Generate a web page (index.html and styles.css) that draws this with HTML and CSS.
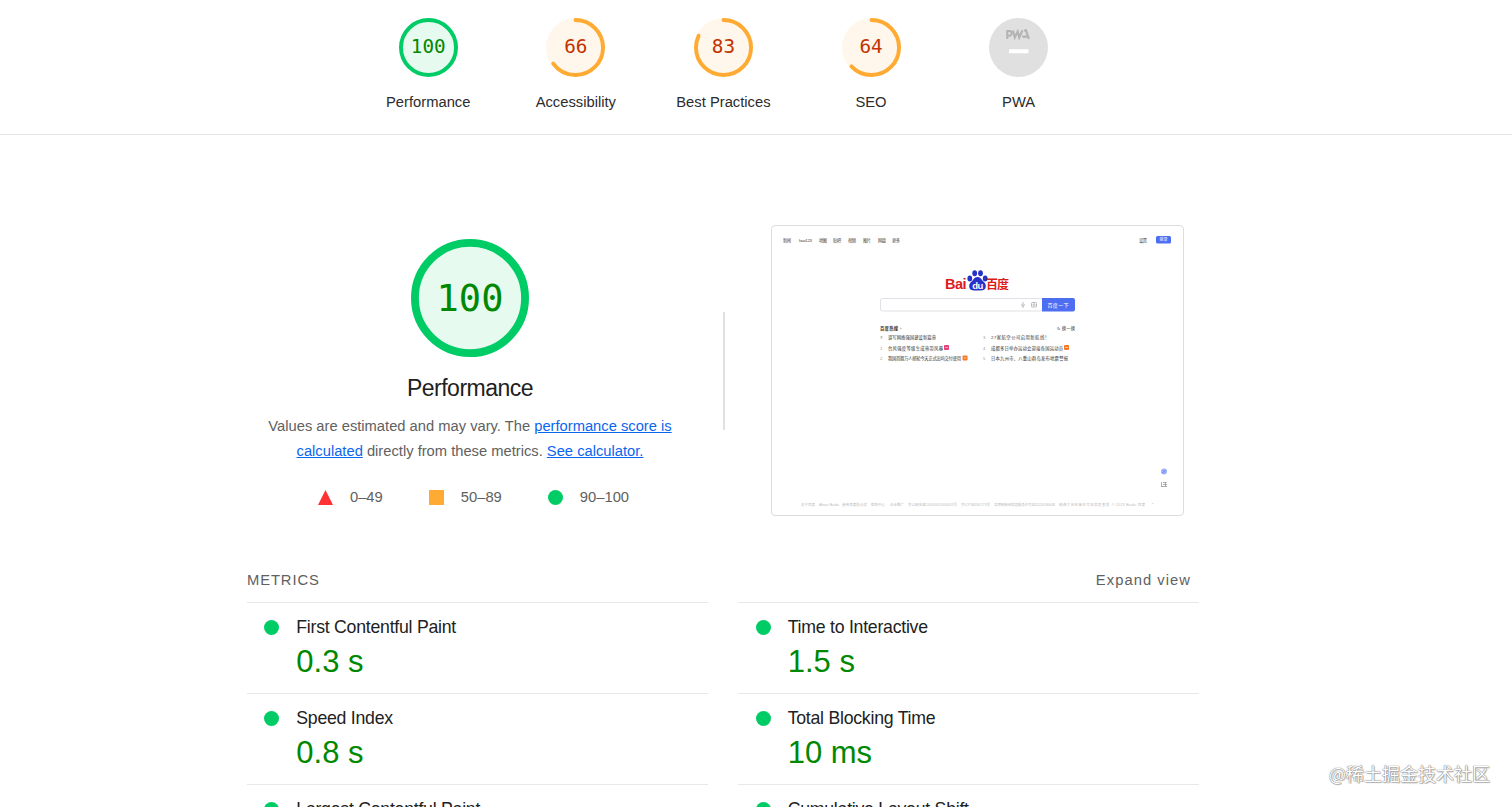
FILE: index.html
```
<!DOCTYPE html>
<html lang="en">
<head>
<meta charset="utf-8">
<title>Lighthouse Report</title>
<link rel="stylesheet" href="styles.css">
</head>
<body>
<header class="scores">
  <div class="score pass">
    <div class="gauge"><svg class="ring" viewBox="0 0 120 120"><circle class="base" cx="60" cy="60" r="56"/><circle class="arc" cx="60" cy="60" r="56"/></svg><span class="num">100</span></div>
    <span class="label">Performance</span>
  </div>
  <div class="score average">
    <div class="gauge"><svg class="ring" viewBox="0 0 120 120"><circle class="base" cx="60" cy="60" r="56"/><circle class="arc" cx="60" cy="60" r="56" pathLength="100" stroke-dasharray="65 100"/></svg><span class="num">66</span></div>
    <span class="label">Accessibility</span>
  </div>
  <div class="score average">
    <div class="gauge"><svg class="ring" viewBox="0 0 120 120"><circle class="base" cx="60" cy="60" r="56"/><circle class="arc" cx="60" cy="60" r="56" pathLength="100" stroke-dasharray="82 100"/></svg><span class="num">83</span></div>
    <span class="label">Best Practices</span>
  </div>
  <div class="score average">
    <div class="gauge"><svg class="ring" viewBox="0 0 120 120"><circle class="base" cx="60" cy="60" r="56"/><circle class="arc" cx="60" cy="60" r="56" pathLength="100" stroke-dasharray="63 100"/></svg><span class="num">64</span></div>
    <span class="label">SEO</span>
  </div>
  <div class="score">
    <div class="gauge"><svg class="pwa" viewBox="0 0 59 59"><circle cx="29.5" cy="29.5" r="29.5" fill="#e0e0e0"/><g fill="none" stroke="#b3b3b3" stroke-width="2.1"><path d="M18.300 21v-8h2a2.300 2.300 0 0 1 0 4.800h-2"/><path d="M24 12.500l1.800 7 2.900-6 1.500 6 3.300-7.300"/><path d="M33.200 18.600h5M35 12.800l2-.5 2.900 8.700"/></g><rect x="20" y="31.200" width="19.500" height="4" rx=".6" fill="#fff"/></svg></div>
    <span class="label">PWA</span>
  </div>
</header>

<main class="report">
  <section class="overview">
    <div class="summary">
      <div class="gauge big pass"><svg class="ring" viewBox="0 0 120 120"><circle class="base" cx="60" cy="60" r="56"/><circle class="arc" cx="60" cy="60" r="56"/></svg><span class="num">100</span></div>
      <h1 class="title">Performance</h1>
      <p class="note">Values are estimated and may vary. The <a href="#">performance score is</a><br><a href="#">calculated</a> directly from these metrics. <a href="#">See calculator.</a></p>
      <div class="scale">
        <span class="range"><svg class="mark" viewBox="0 0 15 15"><path d="M7.5 0L15 15H0z" fill="#f33"/></svg>0–49</span>
        <span class="range"><svg class="mark" viewBox="0 0 15 15"><path d="M0 0h15v15H0z" fill="#fa3"/></svg>50–89</span>
        <span class="range"><svg class="mark" viewBox="0 0 15 15"><circle cx="7.5" cy="7.5" r="7.5" fill="#0c6"/></svg>90–100</span>
      </div>
    </div>
    <div class="divider"></div>
    <svg class="shot" viewBox="0 0 411 289">
      <g class="nav">
        <text x="11" y="15.500" textLength="8">新闻</text><text x="27" y="15.500" textLength="13">hao123</text><text x="47" y="15.500" textLength="8">地图</text><text x="61" y="15.500" textLength="8">贴吧</text><text x="76" y="15.500" textLength="8">视频</text><text x="91" y="15.500" textLength="8">图片</text><text x="106" y="15.500" textLength="8">网盘</text><text x="120" y="15.500" textLength="8">更多</text><text x="367" y="15.500" textLength="8">设置</text>
      </g>
      <rect x="384" y="10" width="15" height="7.500" rx="1.5" fill="#4e6ef2"/>
      <text class="login" x="387.5" y="15.3" textLength="8">登录</text>
      <text class="logo" x="173" y="63" textLength="21.500">Bai</text>
      <g fill="#2932c8"><ellipse cx="197.800" cy="52.500" rx="2.4" ry="2.900"/><ellipse cx="202.700" cy="47.300" rx="2.4" ry="3"/><ellipse cx="208.500" cy="47.300" rx="2.4" ry="3"/><ellipse cx="213.200" cy="52.500" rx="2.4" ry="2.900"/><path d="M205.500 51c2.700 0 3.800 2 5.300 4 1.500 1.500 3.400 2.700 3 5.700-.4 3.300-3 3.900-8.300 3.900s-7.900-.6-8.300-3.900c-.4-3 1.500-4.200 3-5.700 1.500-2 2.600-4 5.300-4z"/></g>
      <text class="du" x="200.200" y="62.500" textLength="11">du</text>
      <text class="cn" x="214" y="62.500" textLength="23">百度</text>
      <rect x="108.500" y="72.500" width="162" height="12.500" rx="2" fill="#fff" stroke="#e0e1e6" stroke-width="1"/>
      <path d="M270 72h31a2 2 0 0 1 2 2v9.500a2 2 0 0 1-2 2h-31z" fill="#4e6ef2"/>
      <text class="search" x="275.500" y="80.500" textLength="21">百度一下</text>
      <g fill="none" stroke="#aaa" stroke-width=".8"><path d="M251 76v3.500M249 78.500q2 3 4 0M251 80v2"/><rect x="259.500" y="76.500" width="5" height="4.500" rx="1"/><circle cx="262" cy="78.700" r="1"/></g>
      <g class="news">
        <text class="heading" x="108" y="103.500" textLength="18">百度热搜</text><text x="128" y="103.500">›</text><text x="285" y="103.500" textLength="18">↻ 换一换</text>
        <text class="rank" x="108" y="113">⊼</text><text x="116" y="113" textLength="48">谱写网络强国建设新篇章</text>
        <text class="rank" x="108" y="123.500">1</text><text x="116" y="123.500" textLength="55">台风强度等级生成热带风暴</text>
        <text class="rank" x="108" y="134">2</text><text x="116" y="134" textLength="73">我国首艘万人邮轮今天正式出坞交付使用</text>
        <text class="rank" x="211" y="113">3</text><text x="219" y="113" textLength="58">27家航空公司启用新航线！</text>
        <text class="rank" x="211" y="123.500">4</text><text x="219" y="123.500" textLength="72">成都多日举办运动会迎接各国运动员</text>
        <text class="rank" x="211" y="134">5</text><text x="219" y="134" textLength="77">日本九州市、八重山群岛发布地震警报</text>
      </g>
      <g><rect x="172" y="119" width="5" height="5" rx="1" fill="#e83e76"/><rect x="190.500" y="129.500" width="5" height="5" rx="1" fill="#f67b24"/><rect x="292" y="119" width="5" height="5" rx="1" fill="#f67b24"/></g>
      <g fill="none" stroke="#fff" stroke-width=".6"><path d="M173.200 121.500h2.600M191.700 132h2.600M293.200 121.500h2.600"/></g>
      <circle cx="392" cy="245.500" r="3" fill="#9db1f5"/><path d="M390.500 247l3-3" stroke="#4e6ef2" stroke-width=".8"/>
      <path d="M389.500 256v5M391 256.500h3.500M391 258.500h4M389 260.500h6M393.500 256v5" fill="none" stroke="#999" stroke-width=".8"/>
      <g class="foot"><text x="29" y="279.500" textLength="14">关于百度</text><text x="47" y="279.500" textLength="20">About Baidu</text><text x="70" y="279.500" textLength="25">使用百度前必读</text><text x="99" y="279.500" textLength="14">帮助中心</text><text x="118" y="279.500" textLength="14">企业推广</text><text x="136" y="279.500" textLength="49">京公网安备11000002000001号</text><text x="189" y="279.500" textLength="29">京ICP证030173号</text><text x="222" y="279.500" textLength="61">互联网新闻信息服务许可证11220180008</text><text x="287" y="279.500" textLength="50">网络文化经营许可证信息查询</text><text x="340" y="279.500" textLength="33">© 2023 Baidu 百度</text><text x="379" y="279.500">⌃</text></g>
    </svg>
  </section>

  <section class="metrics">
    <div class="metrics-head"><span class="caps">METRICS</span><span class="expand">Expand view</span></div>
    <div class="grid">
      <div class="metric"><i class="dot"></i><div><div class="name">First Contentful Paint</div><div class="value">0.3 s</div></div></div>
      <div class="metric"><i class="dot"></i><div><div class="name">Time to Interactive</div><div class="value">1.5 s</div></div></div>
      <div class="metric"><i class="dot"></i><div><div class="name">Speed Index</div><div class="value">0.8 s</div></div></div>
      <div class="metric"><i class="dot"></i><div><div class="name">Total Blocking Time</div><div class="value">10 ms</div></div></div>
      <div class="metric"><i class="dot"></i><div><div class="name">Largest Contentful Paint</div></div></div>
      <div class="metric"><i class="dot"></i><div><div class="name">Cumulative Layout Shift</div></div></div>
    </div>
  </section>
</main>
<div class="watermark">@稀土掘金技术社区</div>
</body>
</html>
```
FILE: styles.css
```
* { box-sizing: border-box; }
body {
  margin: 0;
  height: 807px;
  overflow: hidden;
  background: #fff;
  color: #212121;
  font-family: "Liberation Sans", Arial, "Noto Sans CJK SC", sans-serif;
  font-size: 14.76px;
}
.scores {
  display: flex;
  justify-content: center;
  height: 135px;
  padding: 17.600px 65.200px 0 0;
  border-bottom: 1px solid #e6e6e6;
}
.score {
  display: flex;
  flex-direction: column;
  align-items: center;
  width: 147.600px;
}
.gauge {
  display: grid;
  place-items: center;
  width: 59px;
  height: 59px;
}
.gauge > * { grid-area: 1 / 1; }
.ring, .pwa { display: block; width: 100%; height: 100%; }
.ring { transform: rotate(-90deg); }
.arc { fill: none; stroke-width: 8; stroke-linecap: round; }
.pass .base { fill: #e6faf0; }
.pass .arc { stroke: #0c6; }
.pass .num { color: #080; }
.average .base { fill: #fff7eb; stroke: #fff7eb; stroke-width: 8; }
.average .arc { stroke: #fa3; }
.average .num { color: #c33300; }
.num {
  z-index: 1;
  font-family: "DejaVu Sans Mono", monospace;
  font-size: 19.300px;
  line-height: 1;
}
.label { margin-top: 17px; color: #2c2c2c; line-height: 17px; }
.report { width: 953.500px; margin-left: 247px; }
.overview {
  display: flex;
  height: 381px;
  padding-top: 90px;
}
.summary {
  display: flex;
  flex-direction: column;
  align-items: center;
  width: 446px;
  padding-top: 14px;
}
.gauge.big { width: 118px; height: 118px; }
.big .num { font-size: 37px; }
.title {
  margin: 18px 0 0;
  font-size: 23px;
  font-weight: 400;
  letter-spacing: -.5px;
  line-height: 26px;
}
.note {
  margin: 13px 0 0;
  color: #616161;
  font-size: 14.730px;
  line-height: 24.600px;
  text-align: center;
  white-space: nowrap;
}
.note a { color: #0b66ee; }
.scale {
  display: flex;
  gap: 46px;
  margin: 26px 0 0 7px;
  color: #616161;
  line-height: 17px;
}
.range { display: flex; align-items: center; gap: 17px; }
.mark { width: 15px; height: 15px; }
.divider {
  width: 2px;
  height: 118px;
  margin: 87px 46px 0 29.500px;
  background: #e0e0e0;
}
.shot {
  width: 413px;
  height: 291px;
  border: 1px solid #dcdcdc;
  border-radius: 4px;
}
.shot text { font-size: 4.300px; }
.nav { fill: #444; }
.shot .login { fill: #fff; font-size: 4px; }
.shot .logo { fill: #de1b1b; font-size: 14.500px; font-weight: 700; }
.shot .du { fill: #fff; font-size: 9.500px; font-weight: 700; }
.shot .cn { fill: #de1b1b; font-size: 12px; font-weight: 700; }
.shot .search { fill: #fff; font-size: 5px; }
.news { fill: #333; }
.news .rank { fill: #999; }
.news .heading { font-weight: 700; }
.foot { fill: #bbb; }
.shot .foot text { font-size: 3.500px; }
.metrics-head {
  display: flex;
  justify-content: space-between;
  height: 86px;
  padding: 55.500px 9.500px 0 0;
  color: #616161;
  line-height: 17px;
  letter-spacing: .9px;
}
.expand { letter-spacing: 1.050px; }
.grid {
  display: grid;
  grid-template-columns: 461px 461px;
  column-gap: 30.400px;
}
.metric {
  display: flex;
  gap: 17px;
  height: 91.200px;
  padding: 13px 0 0 17.300px;
  border-top: 1px solid #e8e8e8;
}
.metric:nth-last-child(-n+2) { height: 48px; }
.dot {
  width: 15px;
  height: 15px;
  margin-top: 4px;
  border-radius: 50%;
  background: #0c6;
}
.name { font-size: 17.700px; line-height: 22px; letter-spacing: -.25px; }
.value { margin-top: 6px; color: #080; font-size: 31px; line-height: 36px; }
.watermark {
  position: absolute;
  right: 22px;
  bottom: 21px;
  color: #fff;
  font-family: "Noto Sans CJK SC", sans-serif;
  font-size: 18px;
  line-height: 26px;
  text-shadow: 0 0 1px #666, 0 0 1px #888, 1px 1px 1px #bbb;
  white-space: nowrap;
}
```
